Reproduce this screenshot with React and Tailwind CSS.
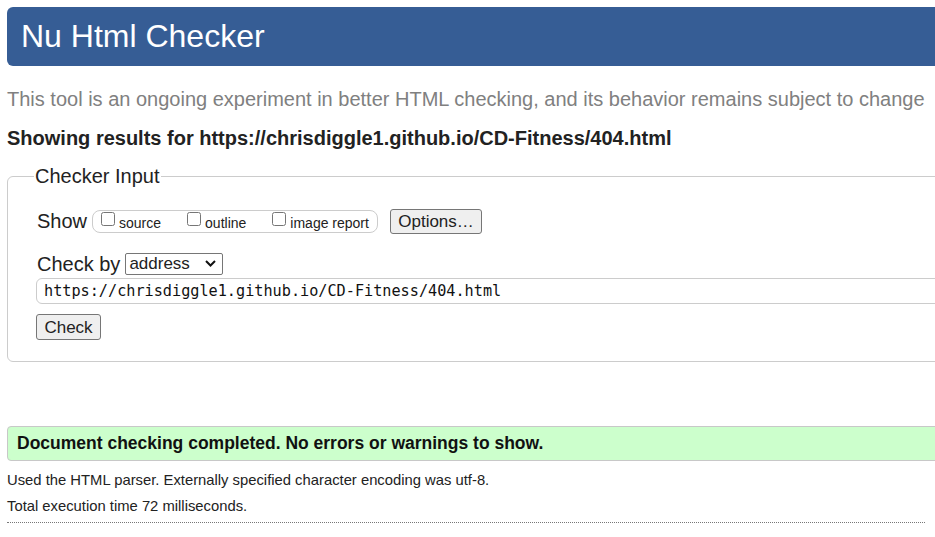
import React from "react";

const FONT = { fontFamily: '"Liberation Sans", Arial, sans-serif' };

function Check({ label }) {
  return (
    <label className="flex items-center gap-[4px]">
      <input type="checkbox" className="m-0 w-[14px] h-[14px] -mt-[5px]" />
      <span className="text-[14px] leading-[16px] mt-[3px]">{label}</span>
    </label>
  );
}

export default function App() {
  return (
    <div className="w-[935px] h-[537px] overflow-hidden bg-white text-[#222]" style={FONT}>
      <div className="w-[1100px] pl-[7px] pt-[7px]">
        <h1 className="h-[59px] bg-[#365d95] rounded-[6px] pl-[14px] flex items-center text-white text-[32px] leading-none pb-[2px]">
          Nu Html Checker
        </h1>

        <p className="mt-[22px] text-[20px] leading-[23px] text-[#808080]">
          This tool is an ongoing experiment in better HTML checking, and its behavior remains subject to change
        </p>

        <p className="mt-[16px] text-[20px] leading-[23px] font-bold">
          Showing results for https://chrisdiggle1.github.io/CD-Fitness/404.html
        </p>

        <fieldset className="mt-[15px] border border-[#ccc] rounded-[6px] pl-[29px] pb-[21px]">
          <legend className="-ml-[3px] px-[1px] text-[20px] leading-[23px]">Checker Input</legend>

          <div className="mt-[21px] flex items-center">
            <span className="text-[20px] leading-[23px]">Show</span>
            <div className="ml-[5px] h-[23px] w-[286px] border border-[#ccc] rounded-[8px] flex items-center pl-[8px] gap-[26px]">
              <Check label="source" />
              <Check label="outline" />
              <Check label="image report" />
            </div>
            <button className="ml-[12px] w-[92px] h-[25px] bg-[#efefef] border border-[#767676] rounded-[3px] text-[17px] leading-none">
              Options…
            </button>
          </div>

          <div className="mt-[18px] flex items-center">
            <span className="text-[20px] leading-[23px]">Check by</span>
            <div className="relative ml-[5px]">
              <select className="appearance-none w-[98px] h-[22px] border border-[#767676] rounded-[2px] pl-[3px] text-[17px] leading-none bg-white">
                <option>address</option>
              </select>
              <svg className="absolute right-[7px] top-[8px] pointer-events-none" width="11" height="7" viewBox="0 0 11 7">
                <path d="M1 1l4.5 4.5L10 1" fill="none" stroke="#111" strokeWidth="2" />
              </svg>
            </div>
          </div>

          <input
            readOnly
            value="https://chrisdiggle1.github.io/CD-Fitness/404.html"
            className="mt-[2px] -ml-[1px] block w-[1060px] h-[26px] border border-[#ccc] rounded-[6px] px-[7px] text-[15.2px] text-[#111] outline-none"
            style={{ fontFamily: '"DejaVu Sans Mono", "Liberation Mono", monospace' }}
          />

          <button className="mt-[10px] -ml-[1px] w-[65px] h-[26px] bg-[#efefef] border border-[#767676] rounded-[3px] text-[17px] leading-none">
            Check
          </button>
        </fieldset>

        <div className="mt-[64px] h-[35px] bg-[#ccffcc] border border-[#c8c8c8] rounded-[4px] pl-[9px] flex items-center">
          <span className="text-[17.5px] font-bold text-[#111]">
            Document checking completed. No errors or warnings to show.
          </span>
        </div>

        <p className="mt-[11px] text-[14.8px] leading-[17px]">
          Used the HTML parser. Externally specified character encoding was utf-8.
        </p>
        <p className="mt-[9px] text-[14.8px] leading-[17px]">Total execution time 72 milliseconds.</p>

        <div className="mt-[7px] w-[918px] border-t border-dotted border-[#777]" />
      </div>
    </div>
  );
}
